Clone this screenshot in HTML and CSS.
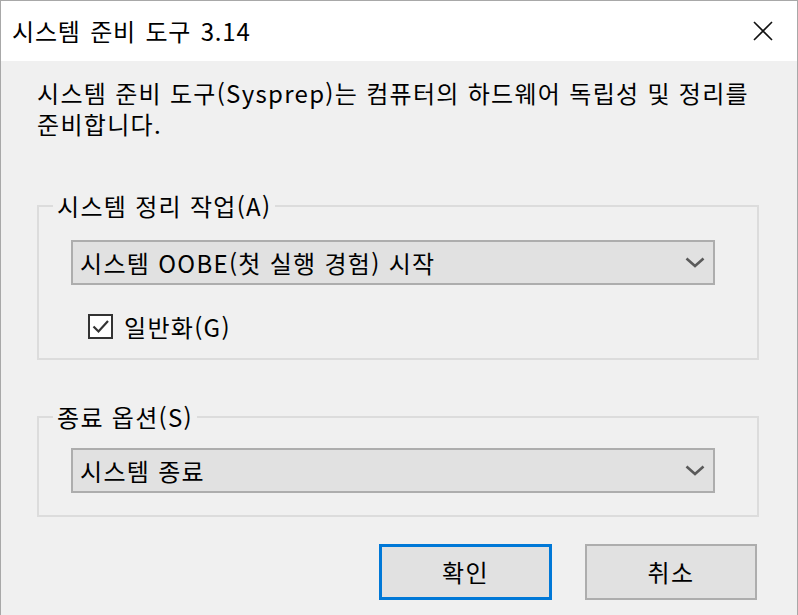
FILE: index.html
```html
<!DOCTYPE html>
<html lang="ko">
<head>
<meta charset="utf-8">
<title>시스템 준비 도구 3.14</title>
<link rel="stylesheet" href="styles.css">
</head>
<body>
<div class="window">
  <div class="titlebar">
    <span class="title">시스템 준비 도구 3.14</span>
    <span class="close"><svg width="20" height="20" viewBox="0 0 20 20"><path d="M1 1L19 19M19 1L1 19" stroke="#111" stroke-width="1.6" fill="none"/></svg></span>
  </div>
  <div class="content">
    <p class="desc"><span class="line">시스템 준비 도구(Sysprep)는 컴퓨터의 하드웨어 독립성 및 정리를</span><span class="line">준비합니다.</span></p>
    <fieldset class="group group-cleanup">
      <legend>시스템 정리 작업(A)</legend>
      <div class="combo combo-cleanup">
        <span class="combo-text">시스템 OOBE(첫 실행 경험) 시작</span>
        <svg class="chevron" width="20" height="11" viewBox="0 0 20 11"><path d="M1.5 1.5L10 9L18.5 1.5" stroke="#5a5a5a" stroke-width="2.6" fill="none"/></svg>
      </div>
      <label class="check">
        <span class="box"><svg width="21" height="21" viewBox="0 0 21 21"><path d="M3.5 10.5L8.5 15.5L18 5" stroke="#333" stroke-width="2.2" fill="none"/></svg></span>
        <span class="check-label">일반화(G)</span>
      </label>
    </fieldset>
    <fieldset class="group group-shutdown">
      <legend>종료 옵션(S)</legend>
      <div class="combo combo-shutdown">
        <span class="combo-text">시스템 종료</span>
        <svg class="chevron" width="20" height="11" viewBox="0 0 20 11"><path d="M1.5 1.5L10 9L18.5 1.5" stroke="#5a5a5a" stroke-width="2.6" fill="none"/></svg>
      </div>
    </fieldset>
    <div class="buttons">
      <button class="btn btn-default">확인</button>
      <button class="btn">취소</button>
    </div>
  </div>
</div>
</body>
</html>
```

FILE: styles.css
```css
html, body {
  margin: 0;
  padding: 0;
  background: #f0f0f0;
}

body {
  font-family: "Noto Sans CJK KR", "Noto Sans", sans-serif;
  font-size: 24px;
  letter-spacing: 1.3px;
  color: #000;
}

.window {
  width: 798px;
  height: 615px;
  box-sizing: border-box;
  border: 1px solid #a8a8a8;
  border-bottom: none;
  display: flex;
  flex-direction: column;
  background: #f0f0f0;
}

.titlebar {
  height: 60px;
  flex: 0 0 60px;
  background: #fff;
  display: flex;
  align-items: center;
  justify-content: space-between;
  padding: 0 24px 0 11px;
}

.title {
  font-size: 24px;
  line-height: 30px;
  letter-spacing: 0.8px;
  word-spacing: 2px;
}

.close {
  display: flex;
  width: 20px;
  height: 20px;
}

.content {
  flex: 1;
  padding: 16px 38px 0 36px;
  display: flex;
  flex-direction: column;
}

.desc {
  margin: 0;
  line-height: 31px;
  display: flex;
  flex-direction: column;
}

.line {
  white-space: nowrap;
  line-height: 31px;
}

.group {
  margin: 0;
  padding: 0;
  border: 2px solid #dcdcdc;
  min-width: 0;
  display: flex;
  flex-direction: column;
}

.group legend {
  margin-left: 14px;
  padding: 0 4px;
  line-height: 30px;
  white-space: nowrap;
}

.group-cleanup {
  margin-top: 52px;
}

.group-shutdown {
  margin-top: 42px;
}

.combo {
  height: 45px;
  box-sizing: border-box;
  border: 2px solid #adadad;
  background: #e1e1e1;
  display: flex;
  align-items: center;
  justify-content: space-between;
  padding: 0 8px 0 7px;
  margin-left: 32px;
  margin-right: 42px;
}

.combo-text {
  line-height: 30px;
  white-space: nowrap;
}

.chevron {
  flex: 0 0 auto;
}

.combo-cleanup {
  margin-top: 19px;
}

.combo-shutdown {
  margin-top: 16px;
  margin-bottom: 22px;
}

.check {
  display: flex;
  align-items: center;
  gap: 11px;
  margin: 29px 0 19px 49px;
  height: 25px;
}

.box {
  width: 25px;
  height: 25px;
  box-sizing: border-box;
  border: 2px solid #333;
  background: #fff;
  display: flex;
  align-items: center;
  justify-content: center;
}

.check-label {
  line-height: 25px;
}

.buttons {
  display: flex;
  justify-content: flex-end;
  gap: 33px;
  margin-top: 27px;
  padding-right: 2px;
}

.btn {
  width: 172px;
  height: 56px;
  box-sizing: border-box;
  border: 2px solid #adadad;
  background: #e1e1e1;
  font-family: inherit;
  font-size: 24px;
  letter-spacing: 1.3px;
  color: #000;
  padding: 0;
  line-height: 30px;
}

.btn-default {
  width: 173px;
  border: 3px solid #0078d7;
}
```
